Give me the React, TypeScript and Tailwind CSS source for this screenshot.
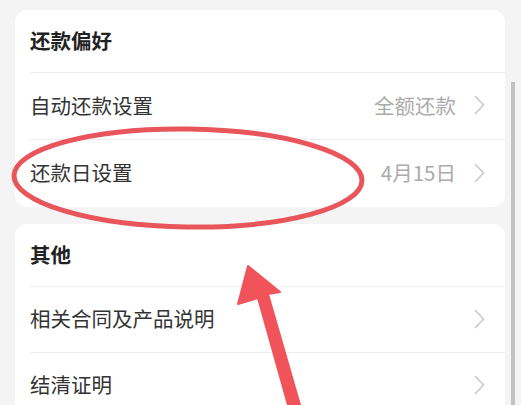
import React from "react";

const Chevron = () => (
  <svg width="11" height="20" viewBox="0 0 11 20" fill="none" className="shrink-0">
    <path d="M1.5 1.5 L9.5 10 L1.5 18.5" stroke="#c9c9c9" strokeWidth="1.6" strokeLinecap="round" strokeLinejoin="round" />
  </svg>
);

const Row = ({ label, value, last, h }: { label: string; value?: string; last?: boolean; h: string }) => (
  <div className={`${h} ml-[15px] flex items-center pr-5 pb-[2px] ${last ? "" : "border-b border-[#eeeeee]"}`}>
    <span className="flex-1 text-[20.5px] text-[#333333]">{label}</span>
    {value && <span className="text-[20.5px] text-[#ababab] mr-[18px]">{value}</span>}
    <Chevron />
  </div>
);

export default function App() {
  return (
    <div
      className="relative w-[521px] h-[405px] overflow-hidden bg-[#f4f4f4] pt-[10px] pl-[15px] pr-[16px]"
      style={{ fontFamily: '"Noto Sans CJK SC", "Noto Sans", sans-serif' }}
    >
      <div className="bg-white rounded-[12px]">
        <div className="h-[63px] ml-[15px] pb-[2px] flex items-center border-b border-[#eeeeee] text-[20.5px] font-bold text-[#222222]">
          还款偏好
        </div>
        <Row h="h-[67px]" label="自动还款设置" value="全额还款" />
        <Row h="h-[67px]" label="还款日设置" value="4月15日" last />
      </div>
      <div className="bg-white rounded-[12px] mt-[17px]">
        <div className="h-[63px] ml-[15px] pb-[2px] flex items-center border-b border-[#eeeeee] text-[20.5px] font-bold text-[#222222]">
          其他
        </div>
        <Row h="h-[66px]" label="相关合同及产品说明" />
        <Row h="h-[66px]" label="结清证明" />
      </div>

      <div className="absolute left-[511px] top-[82px] w-[4px] h-[330px] bg-[#c2c2c2]" />

      <svg className="absolute left-0 top-0" width="521" height="405" viewBox="0 0 521 405">
        <ellipse cx="188" cy="178" rx="174" ry="49" fill="none" stroke="#e8555a" strokeWidth="5" transform="rotate(0.8 188 178)" />
        <path
          d="M248 266 L280 292 L268 294 L300 405 L288 405 L258 298 L238 304 Z"
          fill="#f0545a"
          stroke="#f0545a"
          strokeWidth="2"
          strokeLinejoin="round"
        />
      </svg>
    </div>
  );
}
